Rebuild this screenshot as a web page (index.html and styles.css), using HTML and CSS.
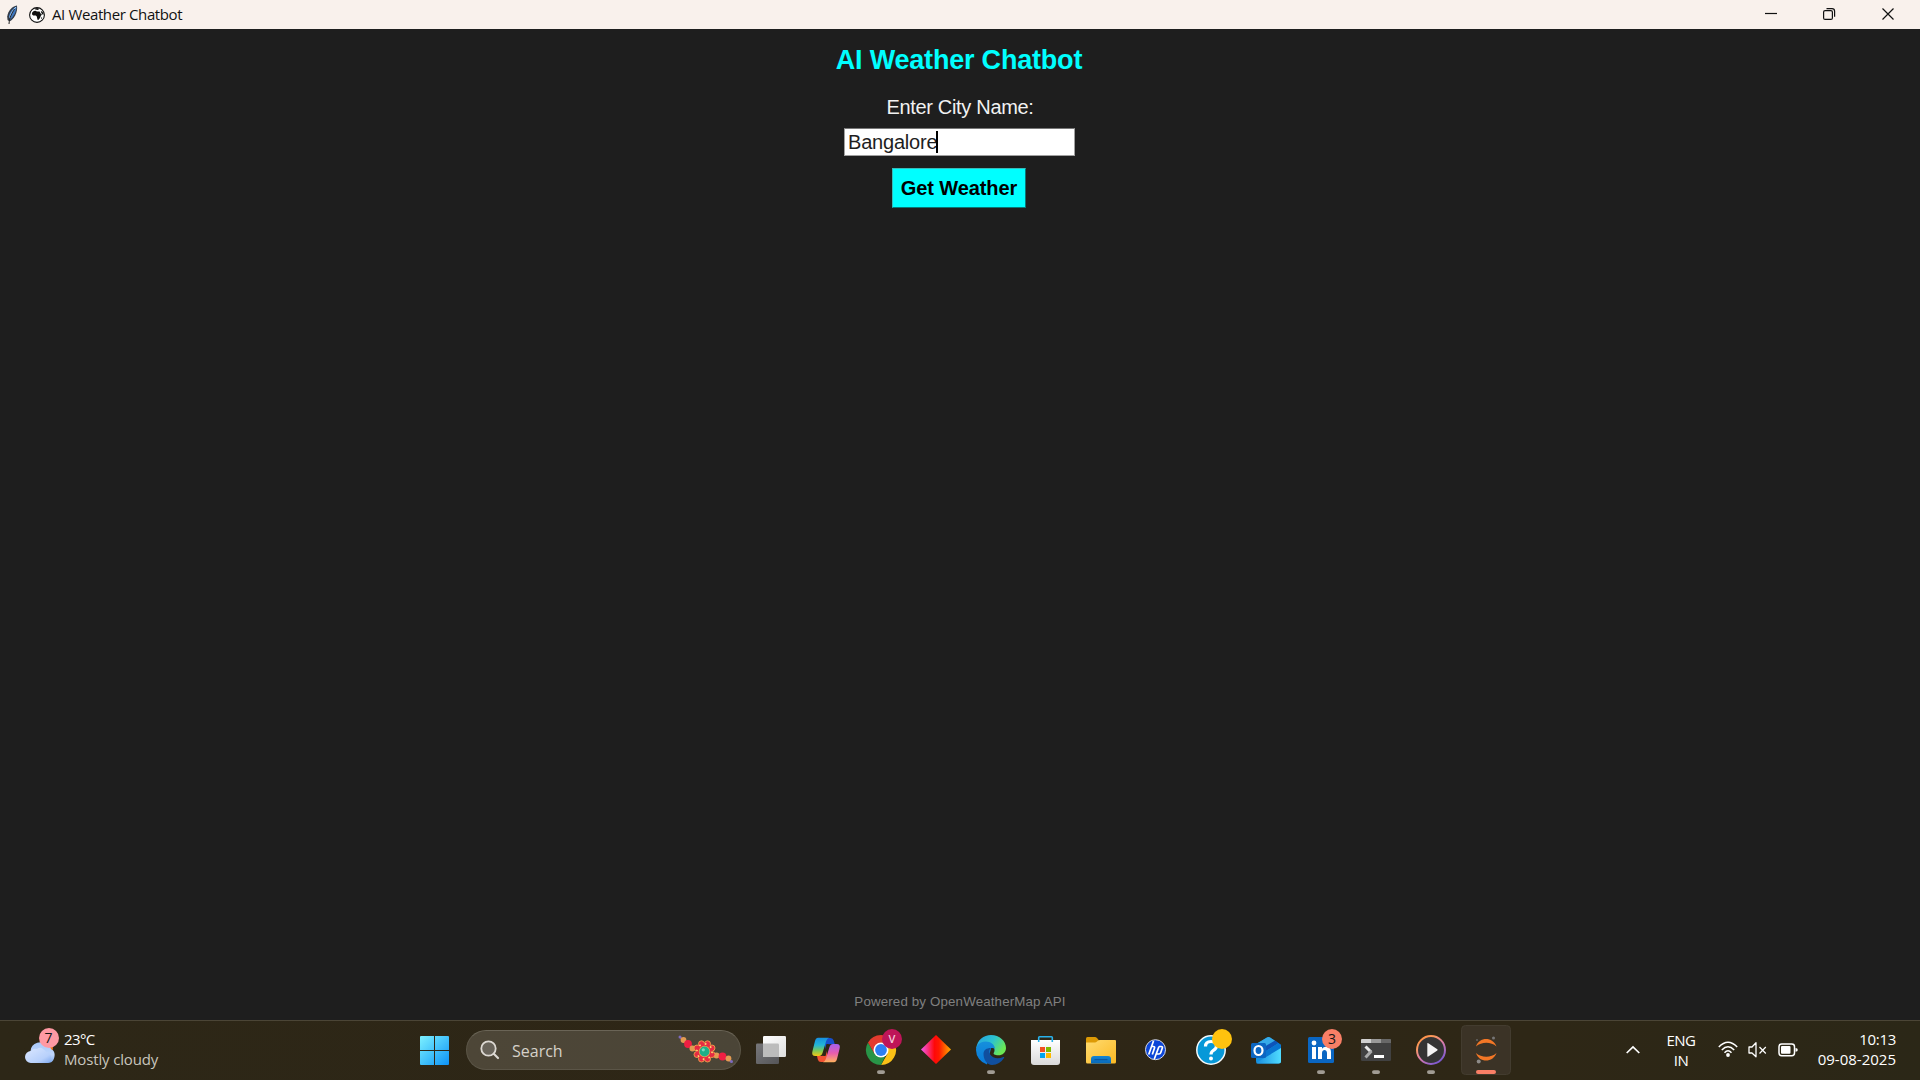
FILE: index.html
```html
<!DOCTYPE html>
<html lang="en">
<head>
<meta charset="utf-8">
<title>AI Weather Chatbot</title>
<link rel="stylesheet" href="styles.css">
</head>
<body>
<div class="screen">
  <header class="titlebar">
    <svg class="feather" width="12" height="20" viewBox="0 0 12 20"><path d="M11 .5C6 1 2 6 1.200 11.500L1.500 15l2 1.500C8 14.500 12 7 11 .5Z" fill="#333b47"/><path d="M10.500 1.500C6.500 3 3 8 3 12l1 3c3-3 6.500-8 6.500-13.500Z" fill="#3f78c0"/><path d="M10 2C7 5 4 9 3.800 13" stroke="#a9d0f5" fill="none"/><path d="M8.500 4C6 8 3.500 12 3 19" stroke="#222" fill="none"/></svg>
    <svg class="globe" width="16" height="16" viewBox="0 0 16 16"><circle cx="8" cy="8" r="7.400" fill="#fff" stroke="#111" stroke-width="1.100"/><path d="M3 5.800 4.800 4 6.500 3.800 8 4.600l2.600-.2.800 1.800 1.500 1.400-1 1.100-.9 2.200L9.300 13 8.500 12.700 7.800 9.500 6.800 8.500H4.200L3.100 7.500Z" fill="#111"/><path d="M5 1.700 8 1l2.500.7L8.800 2.900 6.500 2.500Z" fill="#111"/><path d="m11.800 4 1.700.7 1.200 2.600-.9.500-1.500-1.800Z" fill="#111"/><path d="m12.300 10.500.8-.5-.2 1.700-.7.300Z" fill="#111"/></svg>
    <span class="window-title">AI Weather Chatbot</span>
    <div class="window-controls">
      <svg width="58" height="29" viewBox="0 0 58 29"><path d="M22 13.500h12" stroke="#111" stroke-width="1.200"/></svg>
      <svg width="58" height="29" viewBox="0 0 58 29" fill="none" stroke="#111" stroke-width="1.200"><rect x="22.600" y="10.600" width="8.800" height="8.800" rx="1.500"/><path d="M25.500 8.600h5.500a2.600 2.600 0 0 1 2.600 2.600v5.500"/></svg>
      <svg width="58" height="29" viewBox="0 0 58 29"><path d="m23.500 8.500 11 11m0-11-11 11" stroke="#111" stroke-width="1.200"/></svg>
    </div>
  </header>

  <main class="app">
    <h1 class="heading">AI Weather Chatbot</h1>
    <label class="city-label">Enter City Name:</label>
    <div class="city-entry"><span class="city-value">Bangalore</span><span class="caret"></span></div>
    <button class="get-weather">Get Weather</button>
    <footer class="credit">Powered by OpenWeatherMap API</footer>
  </main>

  <nav class="taskbar">
    <div class="widget">
      <svg width="40" height="60" viewBox="0 0 40 60">
        <defs><linearGradient id="cloud" x1="0" y1="0" x2="0" y2="1"><stop offset="0" stop-color="#a9c9fb"/><stop offset=".6" stop-color="#bfd6fb"/><stop offset="1" stop-color="#7ca8ec"/></linearGradient><linearGradient id="cloudFront" x1="0" y1="0" x2="1" y2="1"><stop offset="0" stop-color="#dce8ff"/><stop offset=".7" stop-color="#b7d0fb"/><stop offset="1" stop-color="#7fa9ee"/></linearGradient></defs>
        <circle cx="26" cy="28" r="7" fill="#f2761c"/>
        <path d="M11.500 43a7 7 0 0 1-1-12 9.500 9.500 0 0 1 17-5 6 6 0 0 1 4 3.500c3 1 4 5 2.500 9Q32.500 43 27.500 43Z" fill="url(#cloud)"/>
        <path d="M11 43a6 6 0 0 1 0-12q2-3 6-2 3-2.500 6 0 2 1 3 3 5 0 5 5.500T26 43Z" fill="url(#cloudFront)"/>
        <circle cx="29" cy="18" r="10" fill="#ff99a4"/>
        <text class="badge-text" x="28.500" y="23">7</text>
      </svg>
      <div class="widget-text"><span class="temp">23°C</span><span class="sky">Mostly cloudy</span></div>
    </div>

    <svg class="start" width="55" height="60" viewBox="0 0 55 60">
      <defs><linearGradient id="win" gradientUnits="userSpaceOnUse" x1="13" y1="16" x2="42" y2="45"><stop offset="0" stop-color="#7df1ff"/><stop offset=".5" stop-color="#44c3fb"/><stop offset="1" stop-color="#0d92f7"/></linearGradient></defs>
      <path d="M14 16h13v14H13V17q0-1 1-1Zm14 0h13q1 0 1 1v13H28ZM13 31h14v14H14q-1 0-1-1Zm15 0h14v13q0 1-1 1H28Z" fill="url(#win)"/>
    </svg>

    <div class="search">
      <svg width="20" height="20" viewBox="0 0 20 20" fill="none" stroke="#ddd9d3" stroke-linecap="round"><circle cx="8.500" cy="8.500" r="7.200" stroke-width="1.800" fill="#69645a"/><path d="m14 14 4 4" stroke-width="2.200"/></svg>
      <span class="search-text">Search</span>
      <svg class="rakhi" width="56" height="30" viewBox="0 0 56 30">
        <path d="M2 2Q10 12 24 15T54 27" stroke="#8d6ab0" stroke-width="1.500" fill="none"/>
        <circle cx="2" cy="2" r="1.500" fill="#7d6abf"/><circle cx="5.500" cy="5" r="2.900" fill="#e39a52"/><circle cx="10" cy="9" r="3.900" fill="#ef1f43"/><circle cx="14.500" cy="13.500" r="3" fill="#e39a52"/>
        <circle cx="38.500" cy="20.500" r="3" fill="#e39a52"/><circle cx="44.500" cy="21.500" r="3.900" fill="#ef1f43"/><circle cx="50.500" cy="23.500" r="2.900" fill="#e39a52"/><circle cx="53.500" cy="26.500" r="1.500" fill="#7d6abf"/>
        <g fill="#e62b43" stroke="#f0a24b" stroke-width=".9"><circle cx="23.500" cy="8.800" r="3"/><circle cx="29.500" cy="8.800" r="3"/><circle cx="34" cy="13" r="3"/><circle cx="34" cy="19.500" r="3"/><circle cx="29.500" cy="24" r="3"/><circle cx="23.500" cy="24" r="3"/><circle cx="19" cy="19.500" r="3"/><circle cx="19" cy="13" r="3"/></g>
        <circle cx="26.500" cy="16.500" r="8.500" fill="#e62b43"/><circle cx="26.500" cy="16.500" r="7.600" fill="none" stroke="#ffd86b" stroke-width="1.700" stroke-dasharray="1.700 4.270"/>
        <circle cx="26.500" cy="16.500" r="5.700" fill="#eaa352"/><circle cx="26.500" cy="16.500" r="4.900" fill="#1faf88"/><circle cx="25.300" cy="14.800" r="1.600" fill="#75d8bd"/>
      </svg>
    </div>

    <div class="apps">
      <svg width="55" height="60" viewBox="0 0 55 60">
        <defs><linearGradient id="tvA" x1="0" y1="0" x2="1" y2="1"><stop offset="0" stop-color="#fff"/><stop offset="1" stop-color="#dedede"/></linearGradient><linearGradient id="tvB" x1="0" y1="0" x2="1" y2="1"><stop offset="0" stop-color="#77777a"/><stop offset="1" stop-color="#555558"/></linearGradient></defs>
        <rect x="13" y="23.500" width="23" height="20.500" rx="1.200" fill="url(#tvB)"/><rect x="20" y="16" width="23" height="21" rx="1.200" fill="url(#tvA)"/><path d="M20 23.500h14.800q1.200 0 1.200 1.200V37H21.200Q20 37 20 35.800Z" fill="#bcbcbc"/>
      </svg>
      <svg width="55" height="60" viewBox="0 0 55 60">
        <defs><linearGradient id="cpA" x1="0" y1="0" x2="0" y2="1"><stop offset="0" stop-color="#168fe0"/><stop offset=".4" stop-color="#22b5d8"/><stop offset=".7" stop-color="#79c95b"/><stop offset="1" stop-color="#f5c814"/></linearGradient><linearGradient id="cpB" x1="0" y1="0" x2="0" y2="1"><stop offset="0" stop-color="#a65ff0"/><stop offset=".5" stop-color="#e75cae"/><stop offset="1" stop-color="#ffb35c"/></linearGradient></defs>
        <path d="M27 18h5.500q2.500 0 3.200 2.500l1 3.500H32q-2 0-2.800 2.500L27 32Z" fill="#174fcd"/>
        <path d="M29 42h-6q-2.500 0-3.200-2.500L19 36h5q2 0 2.700-2.500L29 27Z" fill="#f35332"/>
        <path d="M20 17.700h11q-2 .7-2.800 3.300L24.500 33q-.9 3-3.500 3h-3.500q-4.500 0-3-5L17 21q1-3.300 3-3.300Z" fill="url(#cpA)"/>
        <path d="M36 42.300H25q2-.7 2.800-3.300L31.500 27q.9-3 3.500-3h3.500q4.500 0 3 5L39 39q-1 3.300-3 3.300Z" fill="url(#cpB)"/>
        <path d="m28.500 24-3.500 12h2.500L31 24Z" fill="#2e2616"/>
      </svg>
      <svg width="55" height="60" viewBox="0 0 55 60">
        <path d="M28 22.500h13A15 15 0 0 1 28 45l6.500-11.300Z" fill="#fbc116"/><path d="M28 45A15 15 0 0 1 15 22.500l6.500 11.300 6.500 3.700 4.300-1.200Z" fill="#289447"/><path d="M15 22.500a15 15 0 0 1 26 0H28L21.500 33.800Z" fill="#e33b2e"/>
        <circle cx="28" cy="30" r="7.500" fill="#fff"/><circle cx="28" cy="30" r="5.900" fill="#2d7ff3"/>
        <circle cx="39" cy="19" r="10" fill="#be1558"/><text class="avatar-text" x="39" y="23">V</text><rect class="running" x="24" y="50.200" width="8" height="3.800" rx="1.900"/>
      </svg>
      <svg width="55" height="60" viewBox="0 0 55 60">
        <defs><linearGradient id="dia"><stop offset="0" stop-color="#f25bf5"/><stop offset=".45" stop-color="#ff0808"/><stop offset=".6" stop-color="#ff1800"/><stop offset="1" stop-color="#ffae00"/></linearGradient></defs>
        <path d="m28 15 15 14.500L28 44 13 29.500Z" fill="url(#dia)"/>
      </svg>
      <svg width="55" height="60" viewBox="0 0 55 60">
        <defs><linearGradient id="edA" x1="0" y1="0" x2="1" y2=".5"><stop offset="0" stop-color="#259fe3"/><stop offset=".55" stop-color="#2cc3cf"/><stop offset="1" stop-color="#6be855"/></linearGradient><linearGradient id="edB" x1="0" y1="0" x2="0" y2="1"><stop offset="0" stop-color="#168fdc"/><stop offset="1" stop-color="#0879d9"/></linearGradient></defs>
        <path d="M13.200 28C14.500 20 20.500 15 28 15c8.500 0 15 6 15 13 0 4.500-3.500 7.300-7.500 7.300-4 0-5.300-1.300-4.800-2.300 2.300-3.500 0-8-5.700-8.500Z" fill="url(#edA)"/>
        <path d="M13 30c0-4.500 4-8.500 9.500-8.500 5.500 0 9.500 3.500 9.500 7.500-1.500-1.200-3-1.300-4-.7L24 44.400A15 15 0 0 1 13 30Z" fill="url(#edB)"/>
        <path d="M20.500 34c0-4 3-6 7.500-6-2 1.500-2.200 4-.8 6.500 2.300 3.800 8 4.800 13 2.500.8-.3 1.300.3.800 1A15 15 0 0 1 29 45c-5 0-8.500-5.500-8.500-11Z" fill="#104f9f"/>
        <rect class="running" x="24" y="50.200" width="8" height="3.800" rx="1.900"/>
      </svg>
      <svg width="55" height="60" viewBox="0 0 55 60">
        <defs><linearGradient id="bag" x1="0" y1="0" x2="0" y2="1"><stop offset="0" stop-color="#fff"/><stop offset="1" stop-color="#dadada"/></linearGradient></defs>
        <path d="M13 20h29v22q0 3-3 3H16q-3 0-3-3Z" fill="url(#bag)"/><path d="M20.700 22v-4.500q0-.8.800-.8h12q.8 0 .8.800V22" fill="none" stroke="#29b2ea" stroke-width="1.600"/>
        <path d="M22 27h5v5h-5Z" fill="#f25022"/><path d="M28 27h5v5h-5Z" fill="#7fba00"/><path d="M22 33h5v5h-5Z" fill="#00a4ef"/><path d="M28 33h5v5h-5Z" fill="#ffb900"/>
      </svg>
      <svg width="55" height="60" viewBox="0 0 55 60">
        <defs><linearGradient id="fold" x1="0" y1="0" x2="1" y2="1"><stop offset="0" stop-color="#ffdb70"/><stop offset="1" stop-color="#fbb923"/></linearGradient><linearGradient id="tray" x1="0" y1="0" x2="0" y2="1"><stop offset="0" stop-color="#1585d3"/><stop offset="1" stop-color="#0768b9"/></linearGradient></defs>
        <path d="M14.500 17H22q1 0 2 1l2 2.500V25H13v-6.500q0-1.500 1.500-1.500Z" fill="#dd9a05"/><path d="M13 22.500h9q1 0 2-1l1-1q.8-.5 1.800-.5H42q1 0 1 1v21q0 1.500-1.500 1.500h-27q-1.500 0-1.500-1.500Z" fill="url(#fold)"/><path d="M18 43.500V39q0-3 3-3h14q3 0 3 3v4.500Z" fill="url(#tray)"/><path d="M21.500 39.700h13" stroke="#0a519b"/>
      </svg>
      <svg width="55" height="60" viewBox="0 0 55 60"><circle cx="27.500" cy="29.700" r="10" fill="#0b45d8" stroke="#d9dce9" stroke-width="1"/><path d="m25.500 21-4.800 13.500M23.700 26.500h1.800q1.500 0 1 1.500l-2.200 6.500M31 26.500 26.300 39M31 26.500h2.300q1.500 0 1 1.500l-1.500 4.500q-.5 1.500-1.800 1.500h-2.500" fill="none" stroke="#fff" stroke-width="1.700"/></svg>
      <svg width="55" height="60" viewBox="0 0 55 60"><circle cx="28" cy="30" r="14.200" fill="#0798d8" stroke="#f5fafc" stroke-width="1.500"/><path d="M22.500 26.500q0-5 5.500-5t5.500 4.500q0 2.500-3 4.300Q28 32 28 34.500" fill="none" stroke="#fff" stroke-width="3.200"/><circle cx="28" cy="38.500" r="2" fill="#fff"/><circle cx="39" cy="19" r="10" fill="#ffc20e"/></svg>
      <svg width="55" height="60" viewBox="0 0 55 60">
        <defs><linearGradient id="olA"><stop offset="0" stop-color="#1a8ee0"/><stop offset="1" stop-color="#50dcff"/></linearGradient></defs>
        <path d="m18 24 11-6.500q1.500-.8 3 0L43 25v16q0 2.500-2.500 2.500h-20Q18 43.500 18 41Z" fill="#1490df"/><path d="m20 23 9-5.500q1.500-.8 3 0l5 3.300L28 28Z" fill="#35aae8"/><path d="m26 27 11-6.500 3.500 2.500L28 31Z" fill="#0d54b9"/><path d="M28 31 40.500 23l2.500 2v3L28 38Z" fill="#0875d1"/><path d="M18 43 43 28v13q0 2.500-2.500 2.500h-20q-1.500 0-2.500-.5Z" fill="url(#olA)"/>
        <rect x="13" y="23" width="15" height="15" rx="1.500" fill="#0b66c2"/><ellipse cx="20.500" cy="30.500" rx="4" ry="4.500" fill="none" stroke="#fff" stroke-width="2.200"/>
      </svg>
      <svg width="55" height="60" viewBox="0 0 55 60"><rect x="15" y="17" width="26" height="26" rx="1.500" fill="#0a66c2"/><path d="M19 27h4v12h-4Zm6 0h4v1.700c2-3 9-3 9 3.300v7h-4v-6c0-4-5-4-5 0v6h-4Z" fill="#fff"/><circle cx="21" cy="23" r="2.400" fill="#fff"/><circle cx="39" cy="19" r="10" fill="#f97f66"/><text class="badge-text" x="39" y="24.300">3</text><rect class="running" x="24" y="50.200" width="8" height="3.800" rx="1.900"/></svg>
      <svg width="55" height="60" viewBox="0 0 55 60"><rect x="13" y="19" width="30" height="22" rx="1.300" fill="#414141"/><path d="M14 19h9v4H13v-3q0-1 1-1Z" fill="#d0d0d0"/><path d="M23 19h10v4H23Z" fill="#999"/><path d="M33 19h9q1 0 1 1v3H33Z" fill="#686868"/><path d="m17.500 26.500 5.500 5.500" stroke="#e9e9e9" stroke-width="3"/><path d="m23.500 31-6 6.500" stroke="#aaa" stroke-width="3"/><path d="M26 35h10v3H26Z" fill="#fff"/><rect class="running" x="24" y="50.200" width="8" height="3.800" rx="1.900"/></svg>
      <svg width="55" height="60" viewBox="0 0 55 60"><defs><linearGradient id="mp" x1="0" y1="0" x2=".7" y2="1"><stop offset="0" stop-color="#ff8d38"/><stop offset=".3" stop-color="#fb995f"/><stop offset=".6" stop-color="#d87cae"/><stop offset="1" stop-color="#7b58d0"/></linearGradient></defs><circle cx="28" cy="30" r="14" fill="#343434" stroke="url(#mp)" stroke-width="2"/><path d="M24.300 23.700q0-1 1-.4l9 6q.7.600 0 1.200l-9 6q-1 .6-1-.4Z" fill="#f4f4f4"/><rect class="running" x="24" y="50.200" width="8" height="3.800" rx="1.900"/></svg>
      <svg width="55" height="60" viewBox="0 0 55 60"><rect x="3.500" y="5.500" width="49" height="49" rx="4" fill="#3b3326" stroke="#433c2f"/><path d="M18 26.500C21 16.500 35 16.500 38.500 26.500 33 21.500 23.500 21.500 18 26.500Zm0 6.500C21 43 35 43 38.500 33 33 38 23.500 38 18 33Z" fill="#f37726"/><circle cx="35.500" cy="18" r="1.500" fill="#767677"/><circle cx="19" cy="20" r="1" fill="#666"/><circle cx="20.700" cy="41.500" r="2" fill="#8d8b88"/><rect x="18" y="50" width="20" height="4" rx="2" fill="#f97f66"/></svg>
    </div>

    <div class="tray">
      <svg class="chevron" width="16" height="10" viewBox="0 0 16 10"><path d="m1.700 8 6.300-6 6.300 6" fill="none" stroke="#fff" stroke-width="1.700"/></svg>
      <div class="language"><span>ENG</span><span>IN</span></div>
      <svg class="status" width="82" height="20" viewBox="0 0 82 20" fill="none" stroke="#fff">
        <path d="M.8 7Q10 -2.500 19.200 7M3.800 10Q10 3.500 16.200 10M6.500 12.700Q10 9 13.500 12.700" stroke-width="1.500"/><circle cx="10" cy="15" r="1.900" fill="#fff" stroke="none"/>
        <path d="M31 7h3l4-4.200v14L34 13h-3Z" stroke-width="1.300" stroke-linejoin="round"/><path d="m41.500 7 6.300 6.500m0-6.500-6.300 6.500" stroke-width="1.200"/>
        <rect x="61" y="4" width="15.500" height="11.800" rx="2.700" stroke-width="1.500"/><rect x="63" y="6" width="9.500" height="7.800" rx="1" fill="#fff" stroke="none"/><path d="M77.500 8v3.800q2.300-.3 2.300-1.900T77.500 8Z" fill="#fff" stroke="none"/>
      </svg>
      <div class="clock"><span class="time">10:13</span><span class="date">09-08-2025</span></div>
    </div>
  </nav>
</div>
</body>
</html>
```

FILE: styles.css
```css
* { box-sizing: border-box; }
body { margin: 0; background: #1e1e1e; overflow: hidden; }
svg { display: block; flex: none; }

.screen {
  display: flex;
  flex-direction: column;
  width: 1920px;
  height: 1080px;
}

/* Window title bar */
.titlebar {
  display: flex;
  align-items: center;
  height: 29px;
  padding: 0 3px 0 6px;
  background: #f9f1ec;
  color: #111;
}
.globe { margin-left: 11px; }
.window-title {
  margin-left: 7px;
  padding-bottom: 2px;
  font: 15px/20px "Open Sans", "Noto Sans", sans-serif;
  letter-spacing: -0.38px;
  white-space: nowrap;
}
.window-controls { display: flex; margin-left: auto; }

/* Application */
.app {
  display: flex;
  flex: 1;
  flex-direction: column;
  align-items: center;
  background: #1e1e1e;
  font-family: "Liberation Sans", Arial, sans-serif;
}
.heading {
  margin: 16px 2px 0 0;
  color: #0ff;
  font-size: 27px;
  font-weight: 700;
  line-height: 30px;
  letter-spacing: -0.2px;
}
.city-label {
  margin-top: 20px;
  color: #f2f2f2;
  font-size: 20px;
  line-height: 24px;
  letter-spacing: -0.32px;
}
.city-entry {
  display: flex;
  align-items: center;
  width: 231px;
  height: 28px;
  margin: 9px 1px 0 0;
  padding-left: 3px;
  border: 1px solid #a0a0a0;
  border-top-color: #777;
  background: #fff;
  color: #1e1e1e;
  font-size: 20px;
  letter-spacing: -0.2px;
}
.caret { width: 2px; height: 22px; margin-left: -1px; background: #000; }
.get-weather {
  width: 134px;
  height: 40px;
  margin: 12px 2px 0 0;
  padding: 0;
  border: 1px solid #35bcbc;
  border-right-color: #087777;
  border-bottom-color: #087777;
  background: #0ff;
  color: #000;
  font: bold 20px/38px "Liberation Sans", Arial, sans-serif;
  letter-spacing: -0.1px;
}
.credit {
  margin: auto 0 9px;
  color: #808080;
  font-size: 13.33px;
  line-height: 18px;
  letter-spacing: 0.14px;
}

/* Taskbar */
.taskbar {
  display: flex;
  align-items: center;
  height: 60px;
  background: linear-gradient(90deg, #2d2717, #2e2616 50%, #2e2716 80%, #2b2717);
  box-shadow: inset 0 1px #4b4536;
  color: #fff;
  font: 15px/20px "Open Sans", "Noto Sans", sans-serif;
  white-space: nowrap;
}
.widget { display: flex; width: 387px; padding-left: 20px; }
.widget-text { display: flex; flex-direction: column; padding: 9px 0 0 4px; }
.temp { letter-spacing: -0.6px; }
.sky { color: #c8c5bd; letter-spacing: -0.15px; }
.start { margin-left: 20px; }
.search {
  display: flex;
  align-items: center;
  width: 275px;
  height: 40px;
  margin-left: 4px;
  padding: 0 6px 0 13px;
  border: 1px solid #5b5547;
  border-top-color: #6a6456;
  border-radius: 20px;
  background: linear-gradient(90deg, #4d4637, #4b4537);
}
.search-text { margin-left: 12px; padding-top: 1px; color: #d5d1c9; font-size: 16px; }
.rakhi { margin-left: auto; }
.apps { display: flex; margin-left: 2px; }
.badge-text { fill: #161616; font: 14px "Open Sans", sans-serif; text-anchor: middle; }
.avatar-text { fill: #f4c9da; font: 600 11px "Open Sans", sans-serif; text-anchor: middle; }
.running { fill: #a19c94; }

.tray { display: flex; flex: 1; align-items: center; padding: 0 24px 0 112px; }
.language {
  display: flex;
  flex-direction: column;
  width: 34px;
  margin-left: 23px;
  text-align: center;
  letter-spacing: -0.5px;
}
.status { margin-left: 20px; }
.clock { display: flex; flex-direction: column; margin-left: auto; padding-bottom: 2px; text-align: right; }
.time { letter-spacing: -0.3px; }
.date { letter-spacing: 0; }
```
